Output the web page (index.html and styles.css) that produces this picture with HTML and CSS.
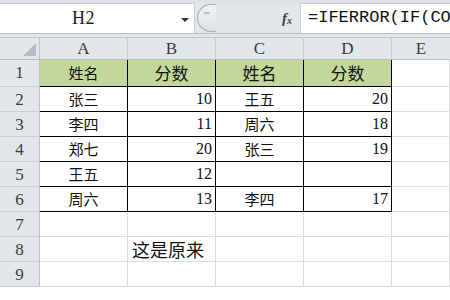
FILE: index.html
```html
<!DOCTYPE html>
<html lang="zh">
<head>
<meta charset="utf-8">
<title>Sheet</title>
<link rel="stylesheet" href="styles.css">
</head>
<body>
<div class="app">
  <div class="topstrip"></div>
  <div class="fbar">
    <div class="namebox">
      <span class="nb-text">H2</span>
      <span class="nb-arrow"></span>
    </div>
    <div class="fmid">
      <span class="knob"></span>
      <span class="fx"><i>f</i><sub>x</sub></span>
    </div>
    <div class="finput">=IFERROR(IF(COUNTIF(A:A,C2),C2,""),"")</div>
  </div>
  <div class="gap"></div>
  <div class="sheet">
    <div class="corner"><span class="tri"></span></div>
    <div class="ch">A</div><div class="ch">B</div><div class="ch">C</div><div class="ch">D</div><div class="ch last">E</div>

    <div class="rh">1</div>
    <div class="c t hd cn">姓名</div><div class="c t hd cn big">分数</div><div class="c t hd cn big">姓名</div><div class="c t hd cn big">分数</div><div class="c"></div>

    <div class="rh">2</div>
    <div class="c t cn">张三</div><div class="c t num">10</div><div class="c t cn">王五</div><div class="c t num">20</div><div class="c"></div>

    <div class="rh">3</div>
    <div class="c t cn">李四</div><div class="c t num">11</div><div class="c t cn">周六</div><div class="c t num">18</div><div class="c"></div>

    <div class="rh">4</div>
    <div class="c t cn">郑七</div><div class="c t num">20</div><div class="c t cn">张三</div><div class="c t num">19</div><div class="c"></div>

    <div class="rh">5</div>
    <div class="c t cn">王五</div><div class="c t num">12</div><div class="c t cn"></div><div class="c t num"></div><div class="c"></div>

    <div class="rh">6</div>
    <div class="c t cn">周六</div><div class="c t num">13</div><div class="c t cn">李四</div><div class="c t num">17</div><div class="c"></div>

    <div class="rh">7</div>
    <div class="c"></div><div class="c"></div><div class="c"></div><div class="c"></div><div class="c"></div>

    <div class="rh">8</div>
    <div class="c"></div><div class="c note">这是原来</div><div class="c"></div><div class="c"></div><div class="c"></div>

    <div class="rh">9</div>
    <div class="c"></div><div class="c"></div><div class="c"></div><div class="c"></div><div class="c"></div>
  </div>
</div>
</body>
</html>
```
FILE: styles.css
```css
html, body {
  margin: 0;
  padding: 0;
  background: #ffffff;
}
.app {
  width: 450px;
  height: 300px;
  overflow: hidden;
  background: #ffffff;
  font-family: "Liberation Serif", "Noto Sans CJK SC", serif;
}
.topstrip {
  height: 3px;
  background: #dfe3e8;
  border-bottom: 0;
}
.fbar {
  display: flex;
  height: 30px;
  background: #e3e6ea;
  border-bottom: 1px solid #b7bdc6;
}
.namebox {
  width: 194px;
  background: #ffffff;
  border-right: 1px solid #c9ced6;
  border-top: 1px solid #c9ced6;
  display: flex;
  align-items: center;
  position: relative;
}
.nb-text {
  flex: 1;
  text-align: center;
  font-size: 18px;
  color: #222;
  padding-right: 14px;
  letter-spacing: 0.5px;
}
.nb-arrow {
  width: 0;
  height: 0;
  border-left: 4px solid transparent;
  border-right: 4px solid transparent;
  border-top: 4px solid #333;
  margin-right: 5px;
  margin-top: 2px;
}
.fmid {
  width: 105px;
  display: flex;
  align-items: center;
  position: relative;
}
.knob {
  width: 18px;
  height: 26px;
  margin-left: 2px;
  border: 1px solid #a4acb6;
  border-right: 0;
  border-radius: 14px 0 0 14px;
  background: linear-gradient(#f1f3f5, #dde1e6);
  position: relative;
}
.knob::after {
  content: "";
  position: absolute;
  left: 6px;
  top: 7px;
  width: 6px;
  height: 2px;
  background: #b9bfc7;
  border-radius: 1px;
}
.fx {
  margin-left: auto;
  margin-right: 8px;
  font-family: "Liberation Serif", serif;
  font-size: 15px;
  font-weight: bold;
  color: #444;
  line-height: 1;
}
.fx sub {
  font-size: 10px;
  font-style: italic;
  vertical-align: -1px;
}
.finput {
  flex: 1;
  background: #ffffff;
  border-left: 1px solid #c9ced6;
  border-top: 1px solid #c9ced6;
  font-family: "Liberation Mono", monospace;
  font-size: 17px;
  line-height: 28px;
  color: #111;
  padding-left: 7px;
  white-space: nowrap;
  overflow: hidden;
}
.gap {
  height: 3px;
  background: #e3e6ea;
  border-bottom: 1px solid #c2c8d0;
}
.sheet {
  display: grid;
  grid-template-columns: 40px 88px 88px 88px 88px 1fr;
  grid-template-rows: 22px 27px repeat(8, 25px);
}
.corner {
  background: #e3e6ea;
  border-right: 1px solid #b9c0c9;
  border-bottom: 1px solid #b9c0c9;
  position: relative;
}
.tri {
  position: absolute;
  right: 3px;
  bottom: 3px;
  width: 0;
  height: 0;
  border-left: 13px solid transparent;
  border-bottom: 13px solid #b7bcc3;
}
.ch {
  background: #e3e6ea;
  border-right: 1px solid #c8ced6;
  border-bottom: 1px solid #b9c0c9;
  text-align: center;
  font-size: 17px;
  line-height: 22px;
  color: #3a3a3a;
}
.ch.last {
  border-right: 0;
}
.rh {
  background: #e3e6ea;
  border-right: 1px solid #b9c0c9;
  border-bottom: 1px solid #c8ced6;
  text-align: center;
  font-size: 17px;
  line-height: 25px;
  color: #3a3a3a;
}
.c {
  border-right: 1px solid #dadcdd;
  border-bottom: 1px solid #dadcdd;
  font-size: 15px;
  color: #111;
  white-space: nowrap;
  line-height: 24px;
}
.c.t {
  border-right-color: #000;
  border-bottom-color: #000;
}
.c.hd {
  background: #c4d79b;
  line-height: 26px;
}
.cn {
  text-align: center;
  font-family: "Noto Sans CJK SC", sans-serif;
  font-size: 15px;
}
.cn.big {
  font-size: 17px;
}
.num {
  text-align: right;
  padding-right: 3px;
  font-family: "Liberation Serif", serif;
  font-size: 16px;
}
.note {
  font-family: "Noto Sans CJK SC", sans-serif;
  font-size: 18px;
  padding-left: 4px;
  overflow: visible;
  position: relative;
  z-index: 1;
}
```
